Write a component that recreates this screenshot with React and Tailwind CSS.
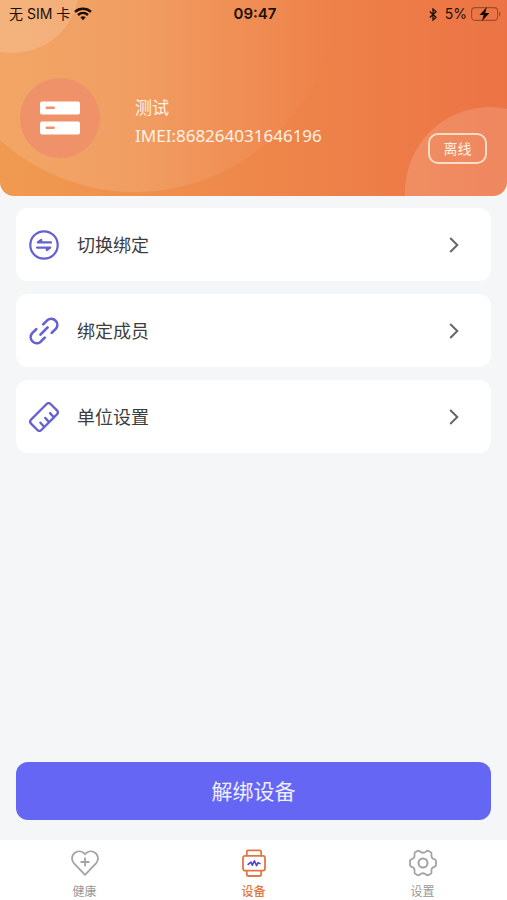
import React from "react";

function WifiIcon() {
  return (
    <svg width="18" height="14" viewBox="0 0 18 14" fill="none" stroke="#1c0f08" strokeWidth="2.5" aria-hidden="true">
      <path d="M1 4.9C5.500 .7 12.500 .7 17 4.900" />
      <path d="M4 8C6.900 5.300 11.100 5.300 14 8" />
      <path d="M6.300 10.300C7.900 8.900 10.100 8.900 11.700 10.300L9 13.200Z" fill="#1c0f08" stroke="none" />
    </svg>
  );
}

function BluetoothIcon() {
  return (
    <svg width="8" height="13" viewBox="0 0 8 13" fill="none" stroke="#1c0f08" strokeWidth="1.3" aria-hidden="true">
      <path d="M.8 3.600L7 9.200L4 12V1L7 3.800L.8 9.400" />
    </svg>
  );
}

function BatteryIcon() {
  return (
    <svg width="30" height="16" viewBox="0 0 30 16" fill="none" aria-hidden="true">
      <rect x="0.600" y="1.600" width="26" height="12.800" rx="3.500" stroke="#9c4f30" strokeWidth="1.100" />
      <path d="M28 5.500C30 6.500 30 9.500 28 10.500Z" fill="#9c4f30" />
      <path d="M15.800 1L8.500 8.900H12.600L11 15L18.500 7H14.300Z" fill="#120905" />
    </svg>
  );
}

function ServerIcon() {
  return (
    <svg width="40" height="34" viewBox="0 0 40 34" aria-hidden="true">
      <rect width="40" height="13" y="0.500" rx="2" fill="#fff" />
      <rect width="40" height="13" y="20.500" rx="2" fill="#fff" />
      <rect x="5.500" y="5.500" width="9.500" height="2.600" rx="1.300" fill="#f0936a" />
      <rect x="5.500" y="25.500" width="9.500" height="2.600" rx="1.300" fill="#f0936a" />
    </svg>
  );
}

function SwitchIcon() {
  return (
    <svg width="30" height="30" viewBox="0 0 30 30" fill="none" stroke="#6460d2" strokeWidth="2.200" strokeLinecap="round" strokeLinejoin="round" aria-hidden="true">
      <circle cx="15" cy="15" r="13.700" />
      <path d="M22 12.400H8.800L12.200 9.800V12" />
      <path d="M8 17.600H21.200L17.800 20.200V18" />
    </svg>
  );
}

function LinkIcon() {
  return (
    <svg width="30" height="30" viewBox="0 0 30 30" fill="none" stroke="#6460d2" strokeWidth="2.600" strokeLinecap="round" aria-hidden="true">
      <path d="M14.200 8.400L18.500 4.100A6.050 6.050 0 0 1 27 12.600L22.700 16.900" />
      <path d="M15.800 21.600L11.500 25.900A6.050 6.050 0 0 1 3 17.400L7.300 13.100" />
      <path d="M11.400 18.600L18.600 11.400" />
    </svg>
  );
}

function RulerIcon() {
  return (
    <svg width="30" height="30" viewBox="0 0 30 30" fill="none" stroke="#6460d2" strokeWidth="2.300" strokeLinecap="round" strokeLinejoin="round" aria-hidden="true">
      <rect x="1.200" y="7.700" width="27.600" height="14.600" rx="2.800" transform="rotate(-45 15 15)" />
      <path d="M15.200 24.800L11.400 20.700M20 20L16.200 15.900M24.800 15.200L21 11.100" />
    </svg>
  );
}

function Chevron() {
  return (
    <svg width="10" height="16" viewBox="0 0 10 16" fill="none" stroke="#666" strokeWidth="2" aria-hidden="true">
      <path d="M1.200 1L8.300 8L1.200 15" />
    </svg>
  );
}

function HeartIcon() {
  return (
    <svg width="28" height="28" viewBox="0 0 28 28" fill="none" stroke="#a3a3a3" strokeWidth="1.800" strokeLinecap="round" strokeLinejoin="round" aria-hidden="true">
      <path d="M14 25.800L3 14.400C-.3 10.800 .8 5.200 4.800 3.200C8 1.600 11.800 2.300 14 5.200C16.200 2.300 20 1.600 23.200 3.200C27.200 5.200 28.300 10.800 25 14.400Z" />
      <path d="M14 9.200V16.800M10.200 13H17.800" />
    </svg>
  );
}

function WatchIcon() {
  return (
    <svg width="28" height="28" viewBox="0 0 28 28" fill="none" strokeLinecap="round" strokeLinejoin="round" aria-hidden="true">
      <g stroke="#dd7847" strokeWidth="1.800">
        <rect x="3" y="6.800" width="22" height="14.800" rx="2" />
        <path d="M6.800 6.600V3Q6.800 1.300 8.500 1.300H19.500Q21.200 1.300 21.200 3V6.600M6.800 21.800V25.300Q6.800 27 8.500 27H19.500Q21.200 27 21.200 25.300V21.800" />
      </g>
      <path d="M8.200 15.400L11 13L12.300 16.200L14.400 11.800L16.600 16.600L18 13.600L20 14.600" stroke="#5b3fd0" strokeWidth="1.600" />
    </svg>
  );
}

function GearIcon() {
  return (
    <svg width="28" height="28" viewBox="0 0 28 28" fill="none" stroke="#a3a3a3" strokeWidth="1.800" strokeLinejoin="round" aria-hidden="true">
      <path d="M10.700 2.300Q9.600 1.300 8.300 2L6.300 3.200Q5.100 3.900 5.500 5.300Q6.100 9.300 2.800 10.200Q1.200 10.600 1 12V16Q1.200 17.400 2.800 17.800Q6.100 18.700 5.500 22.700Q5.100 24.100 6.300 24.800L8.300 26Q9.600 26.700 10.700 25.700Q14 22.800 17.300 25.700Q18.400 26.700 19.700 26L21.700 24.800Q22.900 24.100 22.500 22.700Q21.900 18.700 25.200 17.800Q26.800 17.400 27 16V12Q26.800 10.600 25.200 10.200Q21.900 9.300 22.500 5.300Q22.900 3.900 21.700 3.200L19.700 2Q18.400 1.300 17.300 2.300Q14 5.200 10.700 2.300Z" />
      <circle cx="14" cy="14" r="4.500" strokeWidth="2" />
    </svg>
  );
}

const rows = [
  { label: "切换绑定", Icon: SwitchIcon },
  { label: "绑定成员", Icon: LinkIcon },
  { label: "单位设置", Icon: RulerIcon },
];

const tabs = [
  { label: "健康", Icon: HeartIcon, active: false },
  { label: "设备", Icon: WatchIcon, active: true },
  { label: "设置", Icon: GearIcon, active: false },
];

export default function App() {
  return (
    <div className="flex min-h-screen flex-col bg-[#f5f6f8] font-[Inter,'Noto_Sans_CJK_SC',sans-serif]">
      <header className="relative overflow-hidden rounded-b-[14px] bg-linear-to-r from-[#f09a50] via-[#ee874a] to-[#ec7345] pb-8">
        <div className="absolute -top-[210px] -left-[66px] size-[402px] rounded-full bg-linear-to-r from-[#ffffff1f] from-50% to-[#ffffff00]" />
        <div className="absolute -top-[79px] -left-[53px] size-[132px] rounded-full bg-white/15" />
        <div className="absolute top-[107px] -right-[68px] size-[170px] rounded-full bg-white/14" />

        <div className="relative grid h-7 grid-cols-3 items-center pr-1.5 pl-[9px] text-sm leading-5 text-[#1c0f08]">
          <div className="flex items-center gap-1">
            <span>无 SIM 卡</span>
            <WifiIcon />
          </div>
          <time className="text-center text-[15px] font-semibold">09:47</time>
          <div className="flex items-center justify-end gap-1">
            <BluetoothIcon />
            <span className="pl-1">5%</span>
            <BatteryIcon />
          </div>
        </div>

        <div className="relative mt-[50px] flex items-start px-5">
          <div className="flex size-20 shrink-0 items-center justify-center rounded-full bg-[#ef9269]">
            <ServerIcon />
          </div>
          <div className="mt-4 ml-[35px] flex-1 font-['Noto_Sans','Noto_Sans_CJK_SC',sans-serif] text-[17px] leading-7 text-[#fff1e4]">
            <h1>测试</h1>
            <p>IMEI:868264031646196</p>
          </div>
          <button type="button" className="mt-[55px] h-[31px] w-[59px] rounded-[10px] border-2 border-[#fbdcc4] text-sm leading-5 text-[#fff1e4]">
            离线
          </button>
        </div>
      </header>

      <main className="flex flex-1 flex-col px-4 pt-3 pb-5">
        <ul className="flex flex-col gap-[13px]">
          {rows.map(({ label, Icon }) => (
            <li key={label}>
              <button type="button" className="flex h-[73px] w-full items-center rounded-xl bg-white pr-8 pl-[13px] text-left">
                <Icon />
                <span className="ml-[18px] flex-1 pt-0.5 text-lg text-[#3d3d3d]">{label}</span>
                <Chevron />
              </button>
            </li>
          ))}
        </ul>
        <button type="button" className="mt-auto h-[58px] w-full rounded-xl bg-[#6566f4] pt-0.5 text-[21px] text-[#eeeeff]">
          解绑设备
        </button>
      </main>

      <nav className="grid h-[60px] grid-cols-3 bg-white">
        {tabs.map(({ label, Icon, active }) => (
          <a
            key={label}
            href="#"
            aria-current={active ? "page" : undefined}
            className={
              active
                ? "flex flex-col items-center gap-[7px] pt-[9px] text-xs font-medium text-[#e07845]"
                : "flex flex-col items-center gap-[7px] pt-[9px] text-xs text-[#999999]"
            }
          >
            <Icon />
            {label}
          </a>
        ))}
      </nav>
    </div>
  );
}
